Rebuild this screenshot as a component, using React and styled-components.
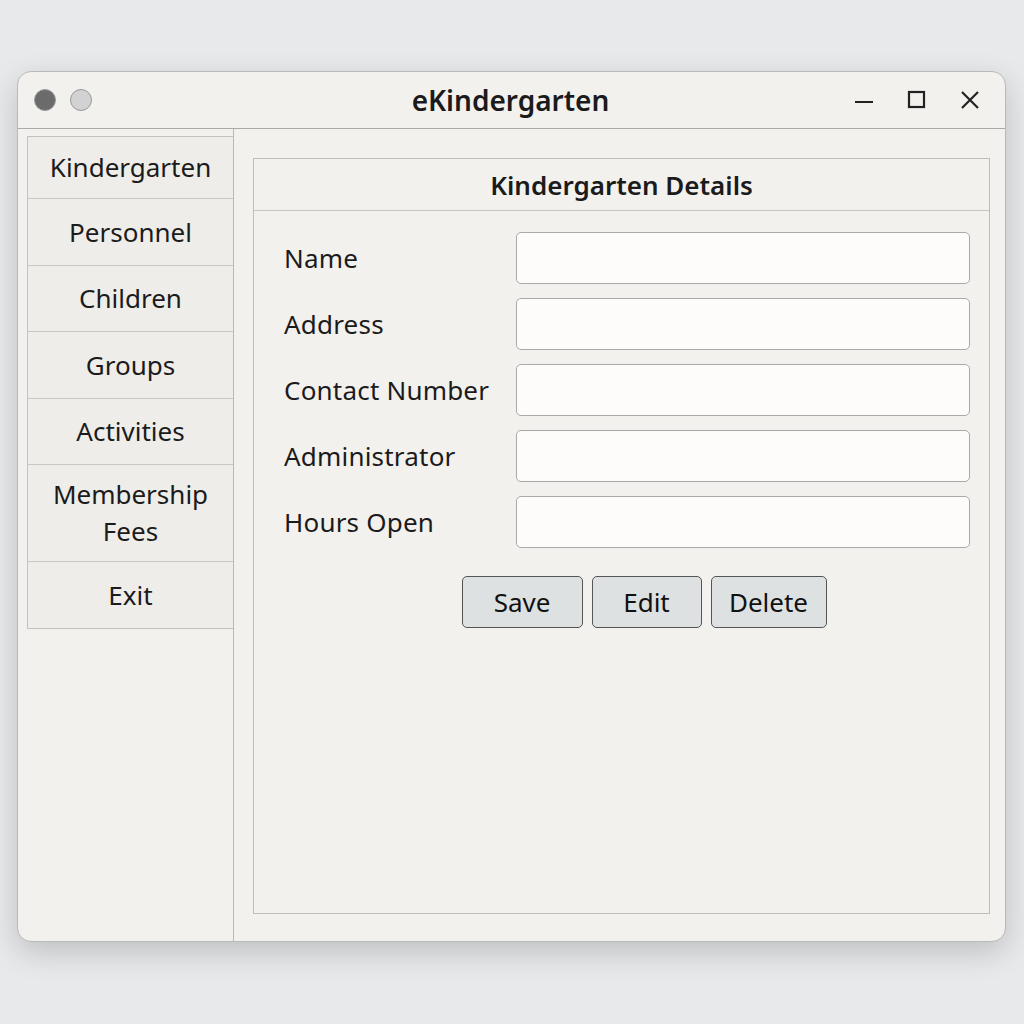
import React from "react";
import styled, { createGlobalStyle } from "styled-components";

const Global = createGlobalStyle`
  html, body { margin: 0; padding: 0; }
  body {
    width: 1024px;
    height: 1024px;
    background: #e7e9ea;
    font-family: "Noto Sans", "Open Sans", sans-serif;
    color: #1b1b1b;
  }
`;

const menuItems = [
  { label: "Kindergarten", h: 62 },
  { label: "Personnel", h: 67 },
  { label: "Children", h: 66 },
  { label: "Groups", h: 67 },
  { label: "Activities", h: 66 },
  { label: "Membership\nFees", h: 97 },
  { label: "Exit", h: 66 },
];

const fields = ["Name", "Address", "Contact Number", "Administrator", "Hours Open"];

const App = () => {
  return (
    <>
      <Global />
      <Page>
        <Window>
          <TitleBar>
            <Dots>
              <Dot color="#6b6b6b" />
              <Dot color="#d2d2d2" />
            </Dots>
            <Title>eKindergarten</Title>
            <Controls>
              <svg width="22" height="22" viewBox="0 0 22 22">
                <path d="M2 13h18" stroke="#222" strokeWidth="2.2" />
              </svg>
              <svg width="22" height="22" viewBox="0 0 22 22">
                <rect x="3" y="3" width="15" height="15" fill="none" stroke="#222" strokeWidth="2.2" />
              </svg>
              <svg width="22" height="22" viewBox="0 0 22 22">
                <path d="M3 3l16 16M19 3L3 19" stroke="#222" strokeWidth="2.2" />
              </svg>
            </Controls>
          </TitleBar>
          <Body>
            <Sidebar>
              <Menu>
                {menuItems.map((m) => (
                  <MenuItem key={m.label} h={m.h}>
                    {m.label}
                  </MenuItem>
                ))}
              </Menu>
            </Sidebar>
            <Main>
              <Panel>
                <PanelHeader>Kindergarten Details</PanelHeader>
                <Form>
                  {fields.map((f) => (
                    <Row key={f}>
                      <Label>{f}</Label>
                      <Field />
                    </Row>
                  ))}
                  <Buttons>
                    <Btn w={121}>Save</Btn>
                    <Btn w={110}>Edit</Btn>
                    <Btn w={116}>Delete</Btn>
                  </Buttons>
                </Form>
              </Panel>
            </Main>
          </Body>
        </Window>
      </Page>
    </>
  );
};

const Page = styled.div`
  padding: 71px 18px 0 17px;
`;

const Window = styled.div`
  width: 989px;
  height: 871px;
  background: #f3f1ee;
  border: 1px solid #b9b9b9;
  border-radius: 14px;
  box-shadow: 0 10px 30px rgba(0, 0, 0, 0.18);
  display: flex;
  flex-direction: column;
  overflow: hidden;
  box-sizing: border-box;
`;

const TitleBar = styled.div`
  height: 56px;
  flex-shrink: 0;
  border-bottom: 1px solid #a9a9a9;
  display: flex;
  align-items: center;
  padding: 0 16px;
`;

const Dots = styled.div`
  display: flex;
  gap: 14px;
`;

const Dot = styled.div`
  width: 22px;
  height: 22px;
  border-radius: 50%;
  background: ${(p) => p.color};
  border: 1px solid #999;
  box-sizing: border-box;
`;

const Title = styled.div`
  flex: 1;
  text-align: center;
  font-size: 28px;
  font-weight: 600;
  margin-left: 76px;
`;

const Controls = styled.div`
  display: flex;
  gap: 31px;
  margin-right: 8px;
`;

const Body = styled.div`
  flex: 1;
  display: flex;
`;

const Sidebar = styled.div`
  width: 216px;
  padding: 7px 0 0 9px;
  box-sizing: border-box;
  border-right: 1px solid #b8b8b8;
`;

const Menu = styled.div`
  border: 1px solid #c2c2c2;
  border-right: none;
  display: flex;
  flex-direction: column;
`;

const MenuItem = styled.div`
  height: ${(p) => p.h}px;
  box-sizing: border-box;
  display: flex;
  align-items: center;
  justify-content: center;
  text-align: center;
  white-space: pre-line;
  line-height: 37px;
  font-size: 26px;
  background: #efedea;
  border-bottom: 1px solid #c7c7c7;
  &:last-child { border-bottom: none; }
`;

const Main = styled.div`
  flex: 1;
  padding: 29px 15px 27px 19px;
  display: flex;
`;

const Panel = styled.div`
  flex: 1;
  border: 1px solid #bdbdbd;
  display: flex;
  flex-direction: column;
`;

const PanelHeader = styled.div`
  height: 51px;
  border-bottom: 1px solid #c4c4c4;
  display: flex;
  align-items: center;
  justify-content: center;
  font-size: 26px;
  font-weight: 600;
`;

const Form = styled.div`
  padding: 21px 19px 0 30px;
  display: flex;
  flex-direction: column;
  gap: 14px;
`;

const Row = styled.div`
  display: flex;
  align-items: center;
`;

const Label = styled.div`
  width: 232px;
  font-size: 26px;
  letter-spacing: 0.2px;
`;

const Field = styled.div`
  flex: 1;
  height: 52px;
  box-sizing: border-box;
  background: #fdfcfb;
  border: 1px solid #a9a9a9;
  border-radius: 5px;
`;

const Buttons = styled.div`
  display: flex;
  justify-content: center;
  gap: 9px;
  margin-top: 14px;
  padding-left: 34px;
`;

const Btn = styled.button`
  width: ${(p) => p.w}px;
  height: 52px;
  background: #dee1e2;
  border: 1px solid #555;
  border-radius: 5px;
  font-family: "Noto Sans", sans-serif;
  font-size: 26px;
  color: #111;
`;

export default App;
